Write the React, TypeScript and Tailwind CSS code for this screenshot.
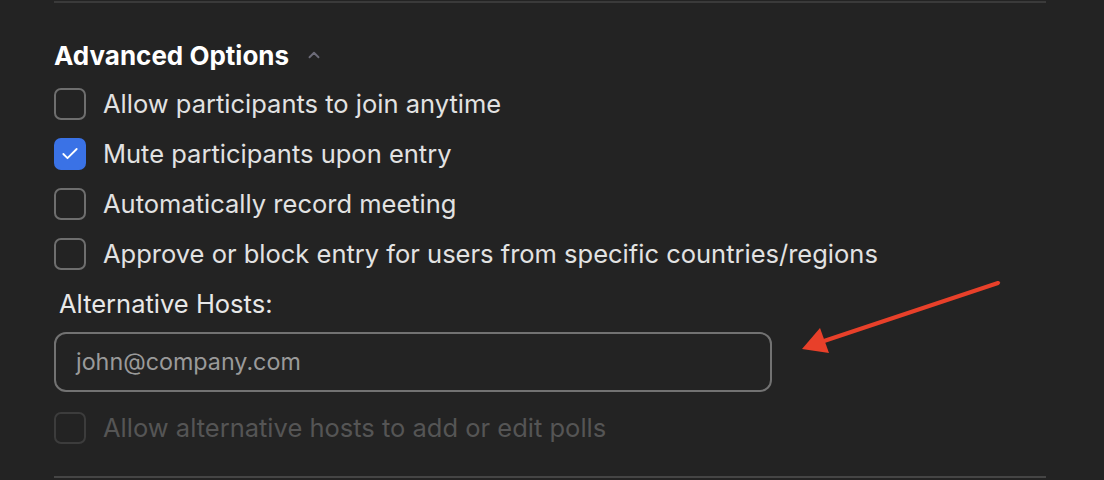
import { Check, ChevronUp } from "lucide-react";

const options = [
  { label: "Allow participants to join anytime", checked: false },
  { label: "Mute participants upon entry", checked: true },
  { label: "Automatically record meeting", checked: false },
  { label: "Approve or block entry for users from specific countries/regions", checked: false },
];

function Checkbox({ checked, disabled }: { checked?: boolean; disabled?: boolean }) {
  if (checked) {
    return (
      <div className="w-[32px] h-[32px] rounded-[7px] bg-[#3a72e6] flex items-center justify-center shrink-0">
        <Check className="w-[20px] h-[20px] text-white" strokeWidth={2.2} />
      </div>
    );
  }
  return (
    <div
      className={`w-[32px] h-[32px] rounded-[7px] border-2 shrink-0 ${
        disabled ? "border-[#3c3c3c]" : "border-[#6e6e6e]"
      }`}
    />
  );
}

export default function App() {
  return (
    <div
      className="relative w-[1104px] h-[480px] bg-[#232323] overflow-hidden px-[54px]"
      style={{ fontFamily: "Inter, 'Noto Sans', sans-serif" }}
    >
      <div className="mt-px h-[2px] w-[992px] bg-[#3a3a3a]" />

      <div className="h-[76px] pt-[28px] flex items-center">
        <span className="text-[26px] font-bold text-white">Advanced Options</span>
        <ChevronUp className="ml-[16px] w-[18px] h-[18px] text-[#6c6b78]" strokeWidth={2.5} />
      </div>

      {options.map((o) => (
        <div key={o.label} className="h-[50px] flex items-center gap-[17px]">
          <Checkbox checked={o.checked} />
          <span className="text-[25.5px] text-[#e2e2e2]">{o.label}</span>
        </div>
      ))}

      <div className="h-[53px] flex items-center pl-[5px] pb-[2px]">
        <span className="text-[25.5px] text-[#e8e8e8]">Alternative Hosts:</span>
      </div>

      <div className="w-[718px] h-[60px] rounded-[12px] border-2 border-[#727272] flex items-center pl-[20px]">
        <span className="text-[23.3px] text-[#9a9a9a]">john@company.com</span>
      </div>

      <div className="h-[72px] flex items-center gap-[17px]">
        <Checkbox disabled />
        <span className="text-[25.5px] text-[#555555]">Allow alternative hosts to add or edit polls</span>
      </div>

      <div className="mt-[12px] h-[2px] w-[992px] bg-[#454545]" />

      <svg className="absolute left-0 top-0" width="1104" height="480" viewBox="0 0 1104 480">
        <line x1="998" y1="283" x2="818" y2="343" stroke="#e8402a" strokeWidth="4" strokeLinecap="round" />
        <polygon points="802,349 820,328 829,353" fill="#e8402a" />
      </svg>
    </div>
  );
}
